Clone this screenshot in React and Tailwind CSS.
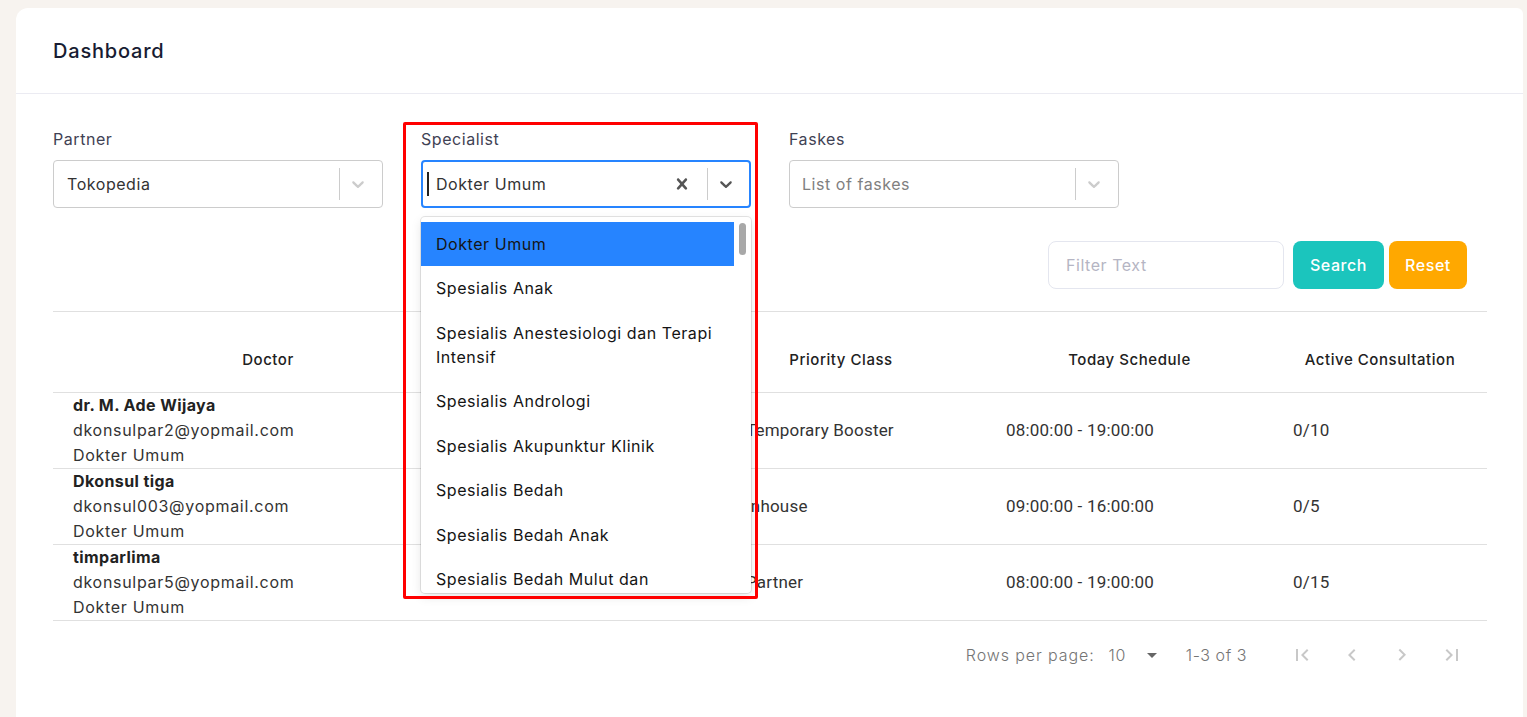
import React from "react";

const Chevron = ({ color = "#cccccc" }) => (
  <svg width="20" height="20" viewBox="0 0 20 20" fill={color}>
    <path d="M4.516 7.548c0.436-0.446 1.043-0.481 1.576 0l3.908 3.747 3.908-3.747c0.533-0.481 1.141-0.446 1.574 0 0.436 0.445 0.408 1.197 0 1.615-0.406 0.418-4.695 4.502-4.695 4.502-0.217 0.223-0.502 0.335-0.787 0.335s-0.57-0.112-0.789-0.335c0 0-4.287-4.084-4.695-4.502s-0.436-1.17 0-1.615z" />
  </svg>
);

const Cross = ({ color = "#555555" }) => (
  <svg width="22" height="22" viewBox="0 0 20 20" fill={color}>
    <path d="M14.348 14.849c-0.469 0.469-1.229 0.469-1.697 0l-2.651-3.030-2.651 3.029c-0.469 0.469-1.229 0.469-1.697 0-0.469-0.469-0.469-1.229 0-1.697l2.758-3.15-2.759-3.152c-0.469-0.469-0.469-1.228 0-1.697s1.228-0.469 1.697 0l2.652 3.031 2.651-3.031c0.469-0.469 1.228-0.469 1.697 0s0.469 1.229 0 1.697l-2.758 3.152 2.758 3.15c0.469 0.469 0.469 1.229 0 1.698z" />
  </svg>
);

const MI = ({ d }) => (
  <svg width="24" height="24" viewBox="0 0 24 24" fill="#c8c8c8">
    <path d={d} />
  </svg>
);

const options = [
  "Dokter Umum",
  "Spesialis Anak",
  "ANES",
  "Spesialis Andrologi",
  "Spesialis Akupunktur Klinik",
  "Spesialis Bedah",
  "Spesialis Bedah Anak",
  "Spesialis Bedah Mulut dan",
];

const rows = [
  { name: "dr. M. Ade Wijaya", email: "dkonsulpar2@yopmail.com", spec: "Dokter Umum", prio: "Temporary Booster", sched: "08:00:00 - 19:00:00", active: "0/10" },
  { name: "Dkonsul tiga", email: "dkonsul003@yopmail.com", spec: "Dokter Umum", prio: "Inhouse", sched: "09:00:00 - 16:00:00", active: "0/5" },
  { name: "timparlima", email: "dkonsulpar5@yopmail.com", spec: "Dokter Umum", prio: "Partner", sched: "08:00:00 - 19:00:00", active: "0/15" },
];

const narrow = { fontFamily: "Roboto, sans-serif" };

export default function App() {
  const font = { fontFamily: "Inter, 'Noto Sans', sans-serif" };
  return (
    <div className="min-h-[717px] bg-[#f7f3ef] pt-2 pl-4 pr-1 overflow-hidden tracking-[0.55px]" style={font}>
      <div className="bg-white rounded-tl-[12px] rounded-tr-[6px] min-h-[709px]">
        <div className="h-[86px] flex items-center px-[37px] border-b border-[#ebebf2]">
          <h1 className="text-[20px] font-medium text-[#181c32] tracking-[0.8px]">Dashboard</h1>
        </div>

        <div className="pl-[37px] pr-[36px] pt-[32px] pb-6">
          {/* filters */}
          <div className="flex gap-[38px]">
            <div className="w-[330px]">
              <div className="text-[16px] leading-[24px] text-[#3f4254] mb-[9px] pt-[1px]">Partner</div>
              <div className="h-[48px] border border-[#cccccc] rounded-[4px] flex items-center">
                <div className="flex-1 pl-[13px] text-[16px] text-[#333333]">Tokopedia</div>
                <div className="w-px h-[32px] bg-[#cccccc]" />
                <div className="px-[8px] py-[8px]"><Chevron /></div>
                <div className="w-[6px]" />
              </div>
            </div>

            <div className="w-[330px] relative">
              <div className="text-[16px] leading-[24px] text-[#3f4254] mb-[9px] pt-[1px]">Specialist</div>
              <div className="h-[48px] border-2 border-[#2684ff] rounded-[4px] flex items-center">
                <div className="flex-1 pl-[4px] flex items-center text-[16px] text-[#333333]">
                  <span className="w-[2px] h-[24px] bg-[#222] mr-[7px]" />
                  Dokter Umum
                </div>
                <div className="pl-[8px] pr-[14px] py-[8px]"><Cross /></div>
                <div className="w-px h-[32px] bg-[#cccccc]" />
                <div className="px-[8px] py-[8px]"><Chevron color="#555555" /></div>
                <div className="w-[5px]" />
              </div>

              {/* menu */}
              <div className="absolute left-0 top-[91px] w-[330px] h-[376px] bg-white rounded-[4px] shadow-[0_0_0_1px_rgba(0,0,0,0.1),0_4px_11px_rgba(0,0,0,0.1)] z-20 overflow-hidden flex">
                <div className="flex-1 pt-[4.5px]">
                  {options.map((o, i) => (
                    <div
                      key={i}
                      className={
                        "px-[15px] pt-[10px] pb-[10.5px] text-[16px] leading-[24px] text-[#141414] " +
                        (i === 0 ? "bg-[#2684ff]" : "")
                      }
                    >
                      {o === "ANES" ? (
                        <>
                          Spesialis Anestesiologi dan Terapi
                          <br />
                          Intensif
                        </>
                      ) : (
                        o
                      )}
                    </div>
                  ))}
                </div>
                <div className="w-[17px] pt-[6px] flex justify-center">
                  <div className="w-[7px] h-[32px] rounded-full bg-[#a8a8a8]" />
                </div>
              </div>

              {/* annotation */}
              <div className="absolute left-[-18px] top-[-4px] w-[355px] h-[477px] border-[3px] border-[#ff0000] rounded-[2px] z-30 pointer-events-none" />
            </div>

            <div className="w-[330px]">
              <div className="text-[16px] leading-[24px] text-[#3f4254] mb-[9px] pt-[1px]">Faskes</div>
              <div className="h-[48px] border border-[#cccccc] rounded-[4px] flex items-center">
                <div className="flex-1 pl-[12px] text-[16px] text-[#808080]">List of faskes</div>
                <div className="w-px h-[32px] bg-[#cccccc]" />
                <div className="px-[8px] py-[8px]"><Chevron /></div>
                <div className="w-[6px]" />
              </div>
            </div>
          </div>

          {/* search row */}
          <div className="flex justify-end items-center mt-[33px] pr-[20px]">
            <div className="w-[236px] h-[48px] border border-[#e4e6ef] rounded-[8px] flex items-center pl-[17px] text-[16px] text-[#b5b5c3]">
              Filter Text
            </div>
            <div className="ml-[9px] w-[91px] h-[48px] rounded-[8px] bg-[#1bc5bd] text-white text-[16px] font-medium flex items-center justify-center">
              Search
            </div>
            <div className="ml-[5px] w-[78px] h-[48px] rounded-[8px] bg-[#ffa800] text-white text-[16px] font-medium flex items-center justify-center">
              Reset
            </div>
          </div>

          {/* table */}
          <div className="mt-[22px] border-t border-[#e0e0e0]">
            <div className="grid grid-cols-[430px_243px_260px_287px_214px] h-[81px] items-center pt-[17px] border-b border-[#e0e0e0] text-[15px] font-medium text-[#212121]">
              <div className="text-center">Doctor</div>
              <div />
              <div className="text-center pr-[30px]">Priority Class</div>
              <div className="text-center">Today Schedule</div>
              <div className="text-center">Active Consultation</div>
            </div>
            {rows.map((r, i) => (
              <div key={i} className="grid grid-cols-[430px_243px_260px_287px_214px] h-[76px] items-center border-b border-[#e0e0e0] text-[16px] text-[#333333]">
                <div className="pl-[20px] leading-[25px] self-start tracking-[0.7px]">
                  <div className="font-bold text-[#222222] tracking-[0.4px]">{r.name}</div>
                  <div>{r.email}</div>
                  <div>{r.spec}</div>
                </div>
                <div />
                <div className="pl-[20px] text-[17px] tracking-[0.2px]" style={narrow}>{r.prio}</div>
                <div className="pl-[20px] text-[17px] tracking-[0.2px]" style={narrow}>{r.sched}</div>
                <div className="pl-[20px] text-[17px] tracking-[0.2px]" style={narrow}>{r.active}</div>
              </div>
            ))}

            {/* pagination */}
            <div className="h-[68px] flex items-center justify-end pr-[15px] text-[16px] text-[#757575] font-light">
              <span className="tracking-[0.9px]">Rows per page:</span>
              <span className="ml-[14px]">10</span>
              <span className="ml-[14px]">
                <svg width="24" height="24" viewBox="0 0 24 24" fill="#666"><path d="M7 10l5 5 5-5z" /></svg>
              </span>
              <span className="ml-[22px] mr-[35px]">1-3 of 3</span>
              <div className="flex gap-[10px]">
                <div className="w-[40px] h-[40px] flex items-center justify-center"><MI d="M18.41 16.59L13.82 12l4.59-4.59L17 6l-6 6 6 6zM6 6h2v12H6z" /></div>
                <div className="w-[40px] h-[40px] flex items-center justify-center"><MI d="M15.41 7.41L14 6l-6 6 6 6 1.41-1.41L10.83 12z" /></div>
                <div className="w-[40px] h-[40px] flex items-center justify-center"><MI d="M8.59 16.34l4.58-4.59-4.58-4.59L10 5.75l6 6-6 6z" /></div>
                <div className="w-[40px] h-[40px] flex items-center justify-center"><MI d="M5.59 7.41L10.18 12l-4.59 4.59L7 18l6-6-6-6zM16 6h2v12h-2z" /></div>
              </div>
            </div>
          </div>
        </div>
      </div>
    </div>
  );
}
